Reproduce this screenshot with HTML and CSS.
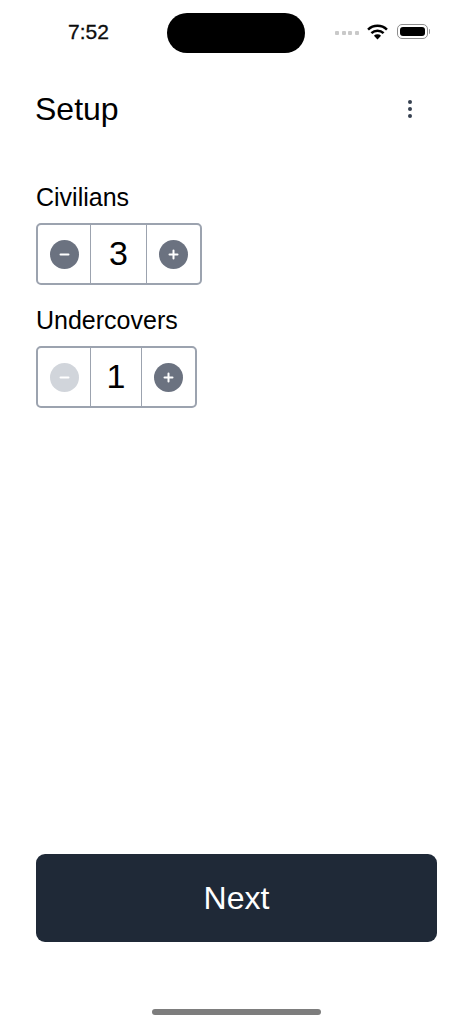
FILE: index.html
```html
<!DOCTYPE html>
<html>
<head>
    <meta charset="utf-8">
    <title>Setup</title>
    <link rel="stylesheet" href="styles.css">
</head>
<body>
    <div class="screen">
        <div class="status-bar">
            <span class="status-time">7:52</span>
            <div class="island"></div>
            <div class="status-icons">
                <div class="signal"><i></i><i></i><i></i><i></i></div>
                <svg class="wifi" width="21" height="16" viewBox="0 0 20 15">
                    <path d="M1 5.2a13 13 0 0 1 18 0" fill="none" stroke="#000" stroke-width="2.4"/>
                    <path d="M4.2 8.6a8.4 8.4 0 0 1 11.6 0" fill="none" stroke="#000" stroke-width="2.4"/>
                    <path d="M6.6 11a4.8 4.8 0 0 1 6.8 0L10 14.6z" fill="#000"/>
                </svg>
                <div class="battery"><div class="battery-level"></div></div>
                <div class="battery-cap"></div>
            </div>
        </div>

        <header class="header">
            <h1>Setup</h1>
            <div class="more"><i></i><i></i><i></i></div>
        </header>

        <main class="content">
            <div class="field">
                <div class="field-label">Civilians</div>
                <div class="stepper">
                    <div class="stepper-cell cell-minus">
                        <div class="round-btn">
                            <svg width="11" height="11" viewBox="0 0 11 11"><path d="M1.5 5.5h8" stroke="#fff" stroke-width="2" stroke-linecap="round"/></svg>
                        </div>
                    </div>
                    <div class="stepper-cell cell-value">3</div>
                    <div class="stepper-cell cell-plus">
                        <div class="round-btn">
                            <svg width="11" height="11" viewBox="0 0 11 11"><path d="M1.5 5.5h8M5.5 1.5v8" stroke="#fff" stroke-width="2" stroke-linecap="round"/></svg>
                        </div>
                    </div>
                </div>
            </div>

            <div class="field">
                <div class="field-label">Undercovers</div>
                <div class="stepper">
                    <div class="stepper-cell cell-minus">
                        <div class="round-btn disabled">
                            <svg width="11" height="11" viewBox="0 0 11 11"><path d="M1.5 5.5h8" stroke="#fff" stroke-width="2" stroke-linecap="round"/></svg>
                        </div>
                    </div>
                    <div class="stepper-cell cell-value narrow">1</div>
                    <div class="stepper-cell cell-plus">
                        <div class="round-btn">
                            <svg width="11" height="11" viewBox="0 0 11 11"><path d="M1.5 5.5h8M5.5 1.5v8" stroke="#fff" stroke-width="2" stroke-linecap="round"/></svg>
                        </div>
                    </div>
                </div>
            </div>
        </main>

        <div class="footer">
            <div class="next-btn">Next</div>
        </div>
        <div class="home-bar"></div>
    </div>
</body>
</html>
```

FILE: styles.css
```css
* {
    box-sizing: border-box;
}
body {
    margin: 0;
    background: #fff;
    color: #000;
    font-family: "Liberation Sans", Arial, sans-serif;
}
.screen {
    display: flex;
    flex-direction: column;
    width: 472px;
    height: 1024px;
    overflow: hidden;
}
.status-bar {
    display: flex;
    align-items: center;
    height: 40px;
    margin-top: 13px;
    padding-left: 68px;
}
.status-time {
    width: 99px;
    margin-top: -2px;
    font-size: 21px;
    -webkit-text-stroke: 0.3px #000;
    color: #111;
}
.island {
    width: 138px;
    height: 40px;
    background: #000;
    border-radius: 20px;
}
.status-icons {
    display: flex;
    align-items: center;
    margin-left: 30px;
    margin-top: -3px;
}
.signal {
    display: flex;
    gap: 2.5px;
    margin-right: 8px;
    margin-top: 3px;
}
.signal i {
    width: 4px;
    height: 4px;
    background: #c9c9c9;
    border-radius: 1px;
}
.wifi {
    margin-right: 9px;
}
.battery {
    width: 31px;
    height: 15px;
    padding: 2px;
    border: 1px solid #8e8e8e;
    border-radius: 5px;
}
.battery-level {
    height: 100%;
    background: #000;
    border-radius: 3px;
}
.battery-cap {
    width: 1.5px;
    height: 5px;
    margin-left: 1px;
    background: #999;
    border-radius: 0 1px 1px 0;
}
.header {
    display: flex;
    align-items: center;
    justify-content: space-between;
    height: 40px;
    margin-top: 36px;
    padding: 0 60px 0 35px;
}
.header h1 {
    margin: 0;
    font-size: 32px;
    font-weight: 400;
}
.more {
    display: flex;
    flex-direction: column;
    gap: 2.5px;
}
.more i {
    width: 4.5px;
    height: 4.5px;
    background: #374151;
    border-radius: 50%;
}
.content {
    flex: 1;
    padding: 0 36px;
    margin-top: 53px;
}
.field {
    margin-bottom: 20px;
}
.field-label {
    height: 30px;
    margin-bottom: 11px;
    font-size: 25px;
    line-height: 30px;
}
.stepper {
    display: inline-flex;
    height: 62px;
    border: 2px solid #9ca3af;
    border-radius: 5px;
    vertical-align: top;
}
.stepper-cell {
    display: flex;
    align-items: center;
    justify-content: center;
}
.cell-minus {
    width: 53px;
    border-right: 1.5px solid #9ca3af;
}
.cell-plus {
    width: 54px;
    border-left: 1.5px solid #9ca3af;
}
.cell-value {
    width: 55px;
    padding-bottom: 2px;
    font-size: 34px;
}
.cell-value.narrow {
    width: 50px;
}
.round-btn {
    display: flex;
    align-items: center;
    justify-content: center;
    width: 29px;
    height: 29px;
    background: #6b7280;
    border-radius: 50%;
}
.round-btn.disabled {
    background: #d1d5db;
}
.footer {
    padding: 0 35px 0 36px;
}
.next-btn {
    height: 88px;
    background: #1f2937;
    border-radius: 9px;
    color: #fff;
    font-size: 32px;
    line-height: 88px;
    text-align: center;
}
.home-bar {
    flex: none;
    width: 169px;
    height: 6px;
    margin: 67px auto 9px;
    background: #7d7d7d;
    border-radius: 3px;
}
```
